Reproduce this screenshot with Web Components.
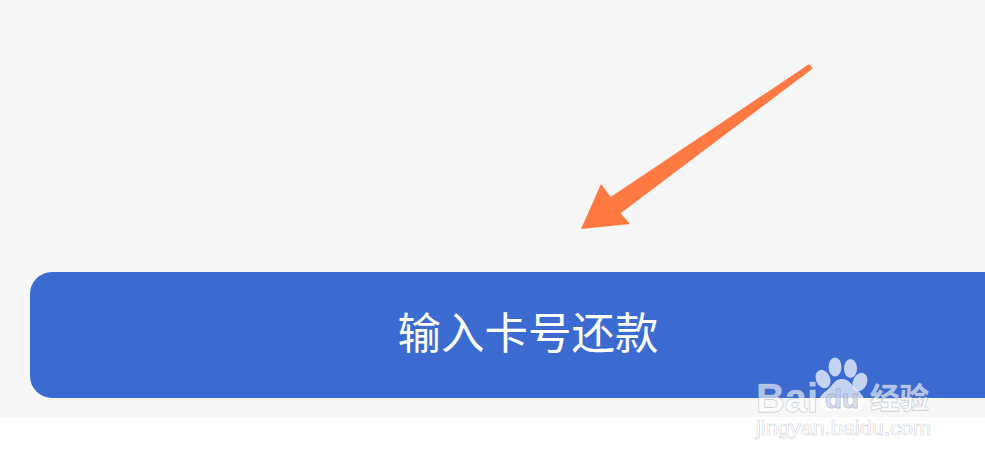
<!DOCTYPE html>
<html lang="zh">
<head>
<meta charset="utf-8">
<title>输入卡号还款</title>
<style>
html,body{margin:0;padding:0;background:#fff;}
body{width:985px;height:462px;overflow:hidden;font-family:"Noto Sans CJK SC","Noto Sans",sans-serif;}
</style>
</head>
<body>
<repay-screen>
  <pointer-arrow slot="overlay"></pointer-arrow>
  <repay-button>输入卡号还款</repay-button>
  <baidu-mark slot="overlay"></baidu-mark>
</repay-screen>
<script>
customElements.define('repay-screen',class extends HTMLElement{
  constructor(){super();this.attachShadow({mode:'open'}).innerHTML=`
  <style>
    :host{display:block;position:relative;width:985px;height:462px;overflow:hidden;background:#fff;}
    .panel{box-sizing:border-box;height:417px;background:#f7f7f7;padding:272px 0 0 30px;overflow:hidden;}
  </style>
  <div class="panel"><slot></slot></div>
  <slot name="overlay"></slot>`;}
});
customElements.define('repay-button',class extends HTMLElement{
  constructor(){super();this.attachShadow({mode:'open'}).innerHTML=`
  <style>
    :host{display:flex;align-items:center;justify-content:center;box-sizing:border-box;width:996px;height:126px;
      padding-bottom:8px;background:#3b6bd1;border-radius:22px;color:#fff;
      font:400 43.5px/1 "Noto Sans CJK SC","Noto Sans",sans-serif;}
  </style>
  <slot></slot>`;}
});
customElements.define('pointer-arrow',class extends HTMLElement{
  constructor(){super();this.attachShadow({mode:'open'}).innerHTML=`
  <style>:host{position:absolute;left:0;top:0;display:block;width:985px;height:462px;pointer-events:none;}svg{display:block;}</style>
  <svg width="985" height="462" viewBox="0 0 985 462">
    <polygon fill="#fe7a42" points="809.3,64 812.8,68.4 620.7,213.3 630,224 581,229 601,184 610.7,197"/>
  </svg>`;}
});
customElements.define('baidu-mark',class extends HTMLElement{
  constructor(){super();this.attachShadow({mode:'open'}).innerHTML=`
  <style>
    :host{position:absolute;left:0;top:0;display:block;width:985px;height:462px;pointer-events:none;}
    svg{display:block;}
    text{fill:rgba(255,255,255,.62);stroke:rgba(140,150,170,.6);stroke-width:.8;paint-order:stroke;}
    .b{font:700 41px "Liberation Sans",sans-serif;}
    .d{font:700 26px "Liberation Sans",sans-serif;fill:rgba(190,200,225,.55);stroke:rgba(120,130,160,.5);}
    .c{font:700 29px "Noto Sans CJK SC",sans-serif;}
    .u{font:400 20px "Liberation Sans",sans-serif;fill:rgba(255,255,255,.75);stroke:rgba(150,150,160,.7);stroke-width:.6;}
    .p{fill:rgba(255,255,255,.7);}
  </style>
  <svg width="985" height="462" viewBox="0 0 985 462">
    <text class="b" x="756" y="412" textLength="62" lengthAdjust="spacingAndGlyphs">Bai</text>
    <g class="p">
      <ellipse cx="835" cy="367" rx="6.5" ry="9.5"/>
      <ellipse cx="850.5" cy="368.5" rx="6.5" ry="9.5"/>
      <ellipse cx="823" cy="379" rx="7" ry="9.5" transform="rotate(-25 823 379)"/>
      <ellipse cx="860" cy="382" rx="7" ry="9.5" transform="rotate(25 860 382)"/>
      <path d="M842 379c8 0 10 7 15 11 7 5 8 10 6 15-2 6-8 7-13 6-6-1-10-1-16 0-6 1-12 0-14-6-2-5 0-10 6-14 6-4 8-12 16-12z"/>
    </g>
    <text class="d" x="825" y="408" textLength="34" lengthAdjust="spacingAndGlyphs">du</text>
    <text class="c" x="870" y="409" textLength="59" lengthAdjust="spacingAndGlyphs">经验</text>
    <text class="u" x="756" y="435" textLength="175" lengthAdjust="spacingAndGlyphs">jingyan.baidu.com</text>
  </svg>`;}
});
</script>
</body>
</html>
